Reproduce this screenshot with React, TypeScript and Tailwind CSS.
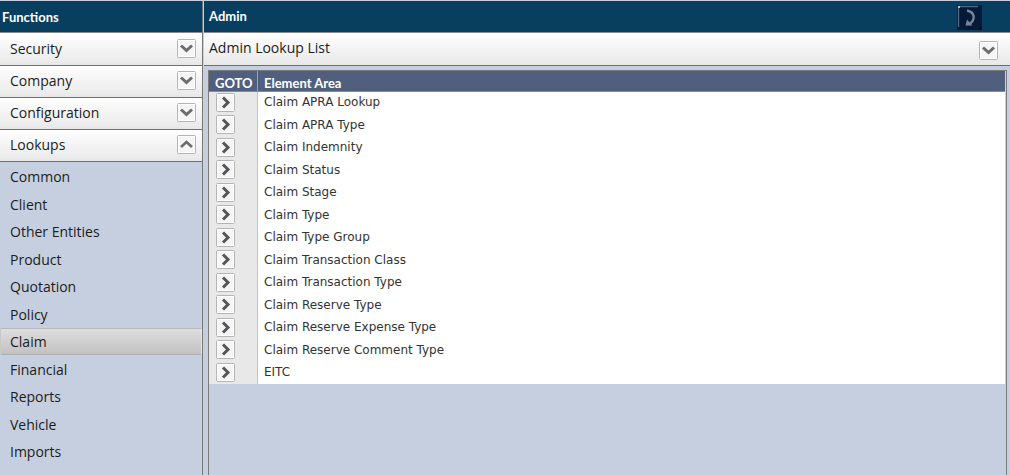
import { useState } from "react";

const MENU_GROUPS = ["Security", "Company", "Configuration", "Lookups"];

const LOOKUP_ITEMS = [
  "Common",
  "Client",
  "Other Entities",
  "Product",
  "Quotation",
  "Policy",
  "Claim",
  "Financial",
  "Reports",
  "Vehicle",
  "Imports",
];

const ELEMENT_AREAS = [
  "Claim APRA Lookup",
  "Claim APRA Type",
  "Claim Indemnity",
  "Claim Status",
  "Claim Stage",
  "Claim Type",
  "Claim Type Group",
  "Claim Transaction Class",
  "Claim Transaction Type",
  "Claim Reserve Type",
  "Claim Reserve Expense Type",
  "Claim Reserve Comment Type",
  "EITC",
];

const CHEVRONS = {
  down: "M4 6.5 L9.5 11.5 L15 6.5",
  up: "M4 12 L9.5 7 L15 12",
  right: "M7 4.5 L12 9.5 L7 14.5",
};

function Chevron({ dir }: { dir: keyof typeof CHEVRONS }) {
  return (
    <svg
      viewBox="0 0 19 19"
      className="block size-[19px] shrink-0"
      aria-hidden="true"
    >
      <rect x="0.5" y="0.5" width="18" height="18" rx="1" fill="#f5f5f5" stroke="#b4b4b4" />
      <rect x="1.5" y="1.5" width="16" height="16" fill="none" stroke="#ffffff" />
      <path
        d={CHEVRONS[dir]}
        fill="none"
        stroke={dir === "right" ? "#55555a" : "#6c6c6c"}
        strokeWidth={dir === "up" ? 2.6 : 3}
      />
    </svg>
  );
}

function RefreshIcon() {
  return (
    <svg viewBox="0 0 25 25" className="block size-[25px]" aria-hidden="true">
      <rect width="25" height="25" fill="#051a38" />
      <path d="M1.5 22 V1.5 H21" fill="none" stroke="#56657b" strokeWidth="1.4" />
      <rect x="1" y="1" width="2" height="2" fill="#b4bcc6" />
      <path
        d="M10 5.5 C17.5 7 19.5 14 12 19.5"
        fill="none"
        stroke="#76859a"
        strokeWidth="2.4"
      />
      <path d="M8.5 20.5 L10 14.5 L15.5 20.5 Z" fill="#76859a" />
      <path d="M24.5 21 V24.5 H21 Z" fill="#000" />
    </svg>
  );
}

export default function App() {
  const [openGroup, setOpenGroup] = useState("Lookups");
  const [selected, setSelected] = useState("Claim");
  const [listOpen, setListOpen] = useState(true);

  return (
    <div className="flex min-h-screen bg-[#c6cfdf] pt-px font-['Open_Sans',sans-serif] text-sm text-[#1c1c1c]">
      <aside className="flex w-[203px] shrink-0 flex-col border-r border-[#777777]">
        <h2 className="h-8 border-b border-[#8a8a8a] bg-[#083e60] pl-0.5 font-['Lato',sans-serif] text-[13px] leading-8 font-bold text-white">
          Functions
        </h2>
        <nav className="border-t border-white">
          {MENU_GROUPS.map((group) => (
            <button
              key={group}
              className="flex h-8 w-full cursor-pointer items-center justify-between border-b border-[#6f6f6f] bg-linear-to-b from-white to-[#e8e8e8] pr-1.5 pb-0.5 pl-2.5 text-left"
              aria-expanded={openGroup === group}
              onClick={() => setOpenGroup(openGroup === group ? "" : group)}
            >
              {group}
              <Chevron dir={openGroup === group ? "up" : "down"} />
            </button>
          ))}
          {openGroup === "Lookups" && (
            <ul className="pt-px">
              {LOOKUP_ITEMS.map((item) => (
                <li key={item} className="odd:h-7 even:h-[27px]">
                  <button
                    className={`flex h-[27px] w-full cursor-pointer items-center rounded-xs border pl-[9px] text-left ${
                      selected === item
                        ? "border-t-[#b8b8b8] border-r-[#e6e6e6] border-b-[#b0b0b0] border-l-[#c8c8c8] bg-linear-to-b from-[#dedede] to-[#c2c2c2]"
                        : "border-transparent"
                    }`}
                    onClick={() => setSelected(item)}
                  >
                    {item}
                  </button>
                </li>
              ))}
            </ul>
          )}
        </nav>
      </aside>
      <main className="ml-px flex min-w-0 flex-1 flex-col">
        <header className="flex h-8 items-center justify-between border-b border-[#8a8a8a] bg-[#083e60] pr-7 pl-[5px]">
          <h1 className="font-['Lato',sans-serif] text-[13px] font-bold text-white">
            Admin
          </h1>
          <button className="cursor-pointer pt-0.5" aria-label="Refresh">
            <RefreshIcon />
          </button>
        </header>
        <div className="flex h-[33px] items-center justify-between border-b border-[#6f6f6f] bg-linear-to-b from-white to-[#e8e8e8] pr-3 pl-[5px]">
          <h2 className="pb-0.5">Admin Lookup List</h2>
          <button
            className="cursor-pointer pt-0.5"
            aria-label="Toggle list"
            onClick={() => setListOpen(!listOpen)}
          >
            <Chevron dir={listOpen ? "down" : "right"} />
          </button>
        </div>
        <section className="mt-1 mr-[3px] ml-1 flex-1 border border-b-0 border-[#7b7b7b] pr-px">
          {listOpen && (
            <table className="w-full border-separate border-spacing-0 bg-white text-left font-['DejaVu_Sans',sans-serif] text-xs text-[#333333]">
              <thead>
                <tr className="h-[21px] bg-[#515f7e] font-['Lato',sans-serif] text-[13px] leading-4 text-white">
                  <th className="w-[49px] border-r border-b border-r-[#9aa0ad] border-b-[#8a8a8a] p-0 pt-1 pl-1.5 font-bold">
                    GOTO
                  </th>
                  <th className="border-b border-[#8a8a8a] p-0 pt-1 pl-1.5 font-bold">
                    Element Area
                  </th>
                </tr>
              </thead>
              <tbody>
                {ELEMENT_AREAS.map((area) => (
                  <tr key={area} className="odd:h-[22px] even:h-[23px]">
                    <td className="border-r border-[#c4c4c4] bg-[#e8e8e8] p-0 pb-0.5 pl-[7px]">
                      <button
                        className="block cursor-pointer"
                        aria-label={`Go to ${area}`}
                      >
                        <Chevron dir="right" />
                      </button>
                    </td>
                    <td className="p-0 pb-0.5 pl-1.5 leading-5">{area}</td>
                  </tr>
                ))}
              </tbody>
            </table>
          )}
        </section>
      </main>
    </div>
  );
}
